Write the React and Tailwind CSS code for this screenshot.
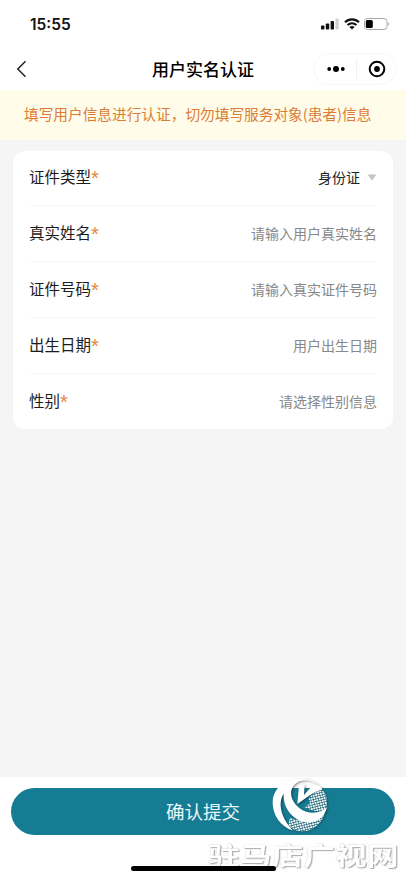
import React from 'react'

const fields = [
  { label: '证件类型', value: '身份证', select: true },
  { label: '真实姓名', placeholder: '请输入用户真实姓名' },
  { label: '证件号码', placeholder: '请输入真实证件号码' },
  { label: '出生日期', placeholder: '用户出生日期' },
  { label: '性别', placeholder: '请选择性别信息' },
]

const SignalIcon = () => (
  <svg width="19" height="12" viewBox="0 0 19 12">
    <rect x="0" y="7.5" width="3.4" height="4" rx="0.8" fill="#111" />
    <rect x="4.8" y="5.5" width="3.4" height="6" rx="0.8" fill="#111" />
    <rect x="9.6" y="3" width="3.4" height="8.5" rx="0.8" fill="#111" />
    <rect x="14.4" y="0.5" width="3.4" height="11" rx="0.8" fill="#d2d2d2" />
  </svg>
)

const WifiIcon = () => (
  <svg width="16" height="12" viewBox="0 0 16 12" fill="none" stroke="#111" strokeWidth="2.1">
    <path d="M1 4.3C5 0.4 11 0.4 15 4.3" />
    <path d="M3.6 7.1C6.2 4.7 9.8 4.7 12.4 7.1" />
    <path d="M8 11.6L5.4 9C6.8 7.7 9.2 7.7 10.6 9Z" fill="#111" stroke="none" />
  </svg>
)

const BatteryIcon = () => (
  <svg width="26" height="12" viewBox="0 0 26 12">
    <rect x="0.5" y="0.5" width="22.5" height="11" rx="3" fill="none" stroke="#a6a6a6" />
    <rect x="1.8" y="1.9" width="7" height="8.2" rx="1.5" fill="#000" />
    <path d="M24.3 4.2C25.5 4.8 25.5 7.2 24.3 7.8Z" fill="#a6a6a6" />
  </svg>
)

const StationLogo = () => (
  <svg width="60" height="60" viewBox="0 0 180 180" className="drop-shadow-[1px_1px_1px_rgba(0,0,0,0.45)]">
    <defs>
      <pattern id="dots" width="7.5" height="7.5" patternUnits="userSpaceOnUse" patternTransform="rotate(-14)">
        <rect width="5.8" height="5.4" fill="#fff" />
      </pattern>
    </defs>
    <path d="M118 72C130 54 148 44 164 48C177 66 176 92 168 106C150 112 126 108 106 96C120 90 128 82 118 72Z" fill="url(#dots)" />
    <path d="M62 128C96 140 138 138 170 105C162 146 130 171 96 169C80 168 68 160 58 152Z" fill="url(#dots)" />
    {/* outer crescent */}
    <path d="M158 36C134 9 96 4 64 15C30 26 9 54 11 86C12 118 31 153 72 167C54 148 36 120 35 92C34 74 40 62 44 56C42 88 58 120 90 136C126 151 164 138 174 97C152 117 116 119 90 98C66 78 58 50 76 29C98 9 134 13 158 36Z" fill="#fff" />
    {/* inner wedge */}
    <path d="M85 87L90 30L107 28L105 60L134 28C146 28 156 35 160 44C136 48 116 66 85 87Z" fill="#fff" />
  </svg>
)

const StatusBar = () => (
  <div className="flex h-12 items-center justify-between pl-[30px] pr-4">
    <span className="pt-0.5 font-[Inter] text-[15.5px] font-semibold text-[#111]">15:55</span>
    <div className="flex items-center gap-1">
      <SignalIcon />
      <WifiIcon />
      <BatteryIcon />
    </div>
  </div>
)

const NavBar = () => (
  <div className="flex h-[42px] items-center pl-4 pr-[9px]">
    <svg width="11" height="18" viewBox="0 0 11 18" fill="none" stroke="#222" strokeWidth="1.5">
      <path d="M9.5 1.3L1.8 9L9.5 16.7" />
    </svg>
    <h1 className="ml-[125px] flex-1 pb-0.5 text-[17px] font-medium leading-none text-black">用户实名认证</h1>
    <div className="flex h-8 w-[84px] items-center rounded-full border border-[#f7f7f7]">
      <svg className="ml-3" width="20" height="8" viewBox="0 0 20 8" fill="#000">
        <circle cx="3.2" cy="4" r="1.9" />
        <circle cx="10" cy="4" r="3" />
        <circle cx="16.8" cy="4" r="1.9" />
      </svg>
      <div className="ml-2.5 h-5 w-px bg-[#f0f0f0]" />
      <svg className="ml-[11px]" width="18" height="18" viewBox="0 0 18 18">
        <circle cx="9" cy="9" r="7.3" fill="none" stroke="#000" strokeWidth="2" />
        <circle cx="9" cy="9" r="2.9" fill="#000" />
      </svg>
    </div>
  </div>
)

const FieldRow = ({ field }) => (
  <div className="mx-4 flex h-14 items-center justify-between border-b border-[#f6f6f6] pb-px first:h-[55px] first:pb-0.5 last:h-[55px] last:border-b-0">
    <span className="whitespace-nowrap text-[15.5px] text-[#1c1c1c]">
      {field.label}<span className="font-['Liberation_Sans'] text-[20px] leading-none align-[-2px] text-[#e08a45]">*</span>
    </span>
    {field.select ? (
      <div className="flex items-center gap-[7px]">
        <span className="text-sm text-[#222]">{field.value}</span>
        <svg width="10" height="7" viewBox="0 0 10 7"><path d="M0.5 0.5H9.5L5 6.5Z" fill="#c4c4c4" /></svg>
      </div>
    ) : (
      <span className="text-sm text-[#888]">{field.placeholder}</span>
    )}
  </div>
)

const App = () => {
  return (
    <div className="relative flex h-[879px] w-[406px] flex-col overflow-hidden bg-[#f5f5f5] font-['Noto_Sans_CJK_SC',sans-serif]">
      <header className="bg-white">
        <StatusBar />
        <NavBar />
      </header>

      <div className="flex h-[50px] items-center whitespace-nowrap bg-[#fffde9] pb-0.5 pl-6 text-[14.68px] text-[#dc7c36]">
        填写用户信息进行认证，切勿填写服务对象(患者)信息
      </div>

      <main className="flex-1 px-[13px] pt-[11px]">
        <div className="rounded-xl bg-white">
          {fields.map((field) => (
            <FieldRow key={field.label} field={field} />
          ))}
        </div>
      </main>

      <footer className="flex h-[102px] flex-col items-center bg-white px-[11px] pt-[11px]">
        <button className="h-[47px] w-full rounded-full bg-[#167c94] text-[18.5px] text-[#e9f8fb]">
          确认提交
        </button>
        <div className="relative z-10 mt-[31px] h-[5px] w-[145px] rounded-full bg-black" />
      </footer>

      {/* station watermark */}
      <div className="pointer-events-none absolute left-[269px] top-[775px]">
        <StationLogo />
      </div>
      <div className="pointer-events-none absolute left-[208px] top-[838px] origin-left scale-x-[1.27] whitespace-nowrap text-[25px] font-bold leading-8 text-white [text-shadow:1px_1px_1px_#aaa,0_0_1px_#bbb]">
        驻马店广视网
      </div>
    </div>
  )
}

export default App
